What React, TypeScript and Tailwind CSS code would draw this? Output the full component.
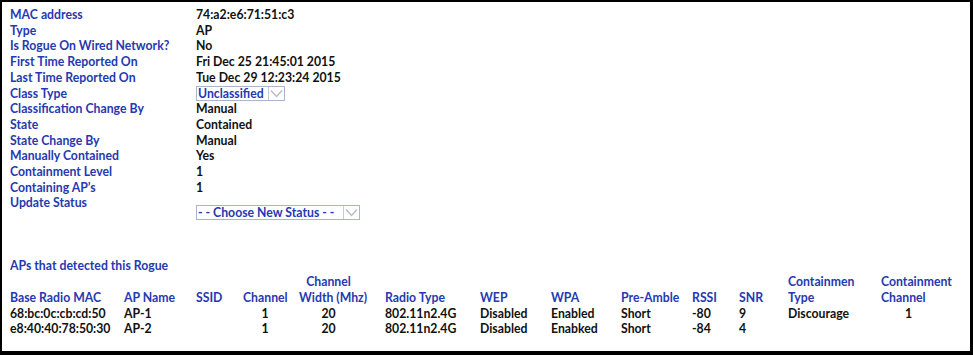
import * as React from 'react';

const details: [string, React.ReactNode][] = [
	['MAC address', '74:a2:e6:71:51:c3'],
	['Type', 'AP'],
	['Is Rogue On Wired Network?', 'No'],
	['First Time Reported On', 'Fri Dec 25 21:45:01 2015'],
	['Last Time Reported On', 'Tue Dec 29 12:23:24 2015'],
	['Class Type', 'select'],
	['Classification Change By', 'Manual'],
	['State', 'Contained'],
	['State Change By', 'Manual'],
	['Manually Contained', 'Yes'],
	['Containment Level', '1'],
	['Containing AP\u2019s', '1'],
];

const rows = [
	['68:bc:0c:cb:cd:50', 'AP-1', '', '1', '20', '802.11n2.4G', 'Disabled', 'Enabled', 'Short', '-80', '9', 'Discourage', '1'],
	['e8:40:40:78:50:30', 'AP-2', '', '1', '20', '802.11n2.4G', 'Disabled', 'Enabked', 'Short', '-84', '4', '', ''],
];

const cols = 'grid grid-cols-[114px_72px_47px_56px_86px_95px_71px_70px_71px_47px_49px_93px_83px] whitespace-nowrap';

const Chevron = () => (
	<svg width="13" height="9" viewBox="0 0 13 9" fill="none">
		<path d="M1 1.5 L6.5 7.5 L12 1.5" stroke="#b8bcc4" strokeWidth="1.4" />
	</svg>
);

const SelectBox = ({ label, width }: { label: string; width: string }) => (
	<div className={`flex h-[15px] items-center border border-[#aab4cc] bg-white ${width}`}>
		<span className="flex-1 truncate pl-[1px] leading-[13px] text-[#2639b0]">{label}</span>
		<span className="flex h-full w-[16px] items-center justify-center border-l border-[#c8ccd4]">
			<Chevron />
		</span>
	</div>
);

export default function App() {
	return (
		<div
			className="box-border h-[355px] w-[973px] border-t-2 border-r-[3px] border-b-[4px] border-l-2 border-black bg-white pl-[8px] pt-[5px] text-[12.25px] font-bold leading-[15.7px] text-[#111]"
			style={{ fontFamily: 'Lato, "Open Sans", sans-serif' }}
		>
			<div className="grid grid-cols-[186px_1fr] whitespace-nowrap">
				{details.map(([label, value]) => (
					<React.Fragment key={label}>
						<div className="text-[#2639b0]">{label}</div>
						<div className="flex items-center">
							{value === 'select' ? (
								<SelectBox label="Unclassified" width="w-[89px]" />
							) : (
								value
							)}
						</div>
					</React.Fragment>
				))}
				<div className="text-[#2639b0]">Update Status</div>
				<div className="pt-[10px]">
					<SelectBox label="- - Choose New Status - -" width="w-[164px]" />
				</div>
			</div>

			<div className="mt-[38px] text-[#2639b0]">APs that detected this Rogue</div>

			<div className={`${cols} text-[#2639b0]`}>
				<div className="col-span-4" />
				<div className="w-[59px] text-center">Channel</div>
				<div className="col-span-6" />
				<div>Containmen</div>
				<div>Containment</div>
				<div>Base Radio MAC</div>
				<div>AP Name</div>
				<div>SSID</div>
				<div>Channel</div>
				<div className="w-[59px] text-center">Width (Mhz)</div>
				<div>Radio Type</div>
				<div>WEP</div>
				<div>WPA</div>
				<div>Pre-Amble</div>
				<div>RSSI</div>
				<div>SNR</div>
				<div>Type</div>
				<div>Channel</div>
			</div>
			{rows.map((r) => (
				<div key={r[0]} className={cols}>
					<div>{r[0]}</div>
					<div>{r[1]}</div>
					<div>{r[2]}</div>
					<div className="w-[44px] text-center">{r[3]}</div>
					<div className="w-[59px] text-center">{r[4]}</div>
					<div>{r[5]}</div>
					<div>{r[6]}</div>
					<div>{r[7]}</div>
					<div>{r[8]}</div>
					<div>{r[9]}</div>
					<div>{r[10]}</div>
					<div>{r[11]}</div>
					<div className="pl-[24px]">{r[12]}</div>
				</div>
			))}
		</div>
	);
}
